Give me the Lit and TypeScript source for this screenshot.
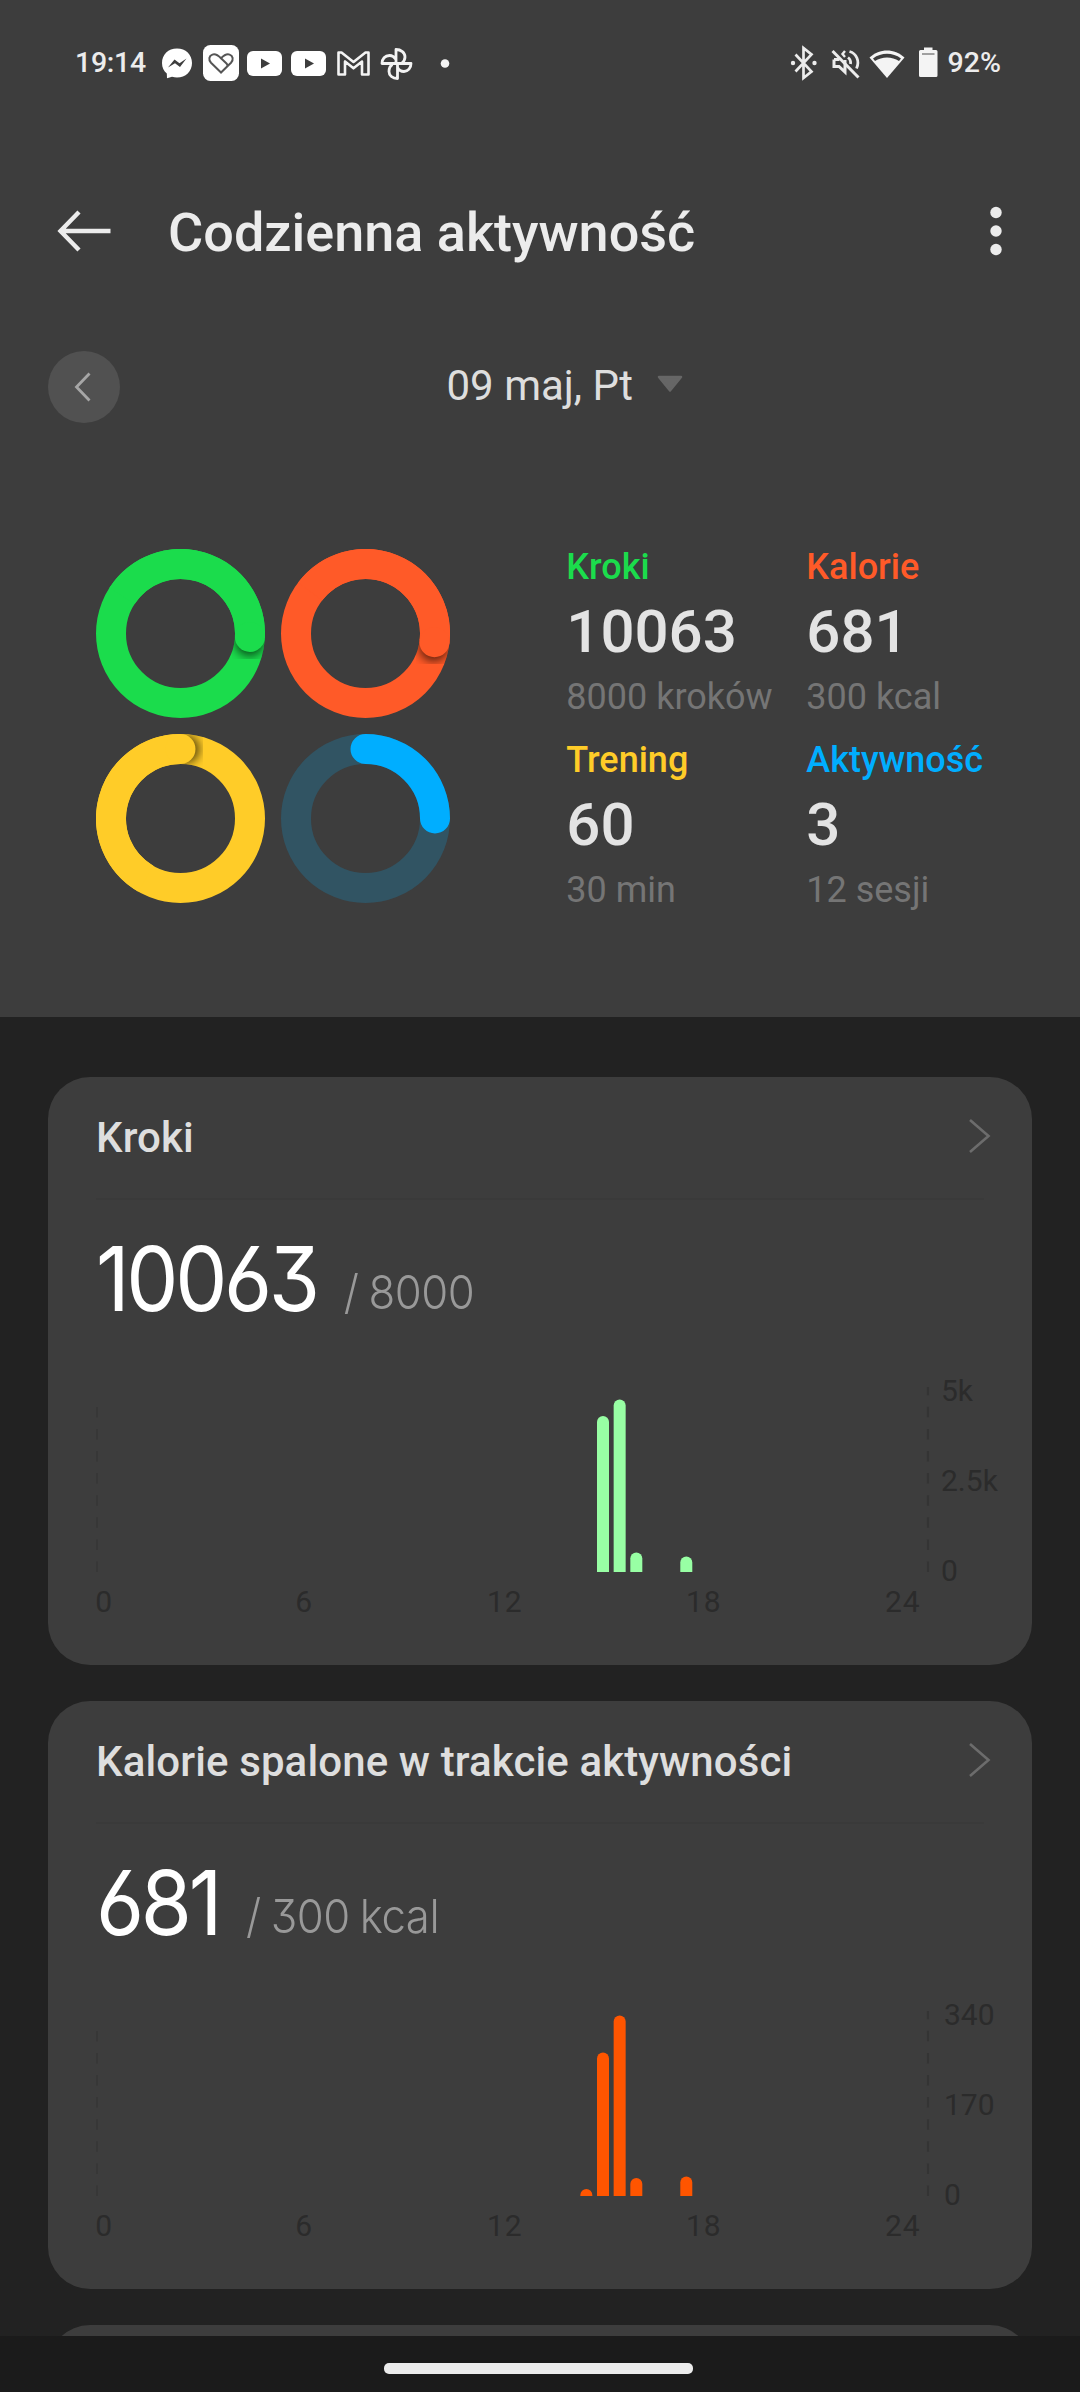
import { LitElement, html, svg, css } from "lit";
import { customElement, property } from "lit/decorators.js";

interface Metric {
  label: string;
  value: string;
  goal: string;
  color: string;
  track: string;
  ratio: number;
}

interface Bar {
  slot: number;
  height: number;
}

const METRICS: Metric[] = [
  { label: "Kroki", value: "10063", goal: "8000 kroków", color: "#1bdc4c", track: "#2b5a38", ratio: 10063 / 8000 },
  { label: "Kalorie", value: "681", goal: "300 kcal", color: "#ff5a28", track: "#6b4238", ratio: 681 / 300 },
  { label: "Trening", value: "60", goal: "30 min", color: "#ffcc28", track: "#6b5f38", ratio: 60 / 30 },
  { label: "Aktywność", value: "3", goal: "12 sesji", color: "#00aeff", track: "#315463", ratio: 3 / 12 },
];

@customElement("progress-ring")
class ProgressRing extends LitElement {
  static styles = css`
    :host { display: block; width: 169px; height: 169px; }
    svg { display: block; }
  `;

  @property() color = "#fff";
  @property() track = "#555";
  @property({ type: Number }) ratio = 0;

  private point(deg: number) {
    const a = (deg * Math.PI) / 180;
    return [84.5 + 69.5 * Math.sin(a), 84.5 - 69.5 * Math.cos(a)];
  }

  private arc(from: number, to: number) {
    const [x1, y1] = this.point(from);
    const [x2, y2] = this.point(to);
    return `M${x1} ${y1}A69.5 69.5 0 ${to - from > 180 ? 1 : 0} 1 ${x2} ${y2}`;
  }

  render() {
    const full = this.ratio >= 1;
    const end = (this.ratio * 360) % 360;
    const [sx, sy] = this.point(end + 4);
    return html`<svg width="169" height="169" viewBox="0 0 169 169" fill="none">
      <defs>
        <mask id="ring"><circle cx="84.5" cy="84.5" r="69.5" stroke="#fff" stroke-width="30" /></mask>
        <filter id="soft" x="-60%" y="-60%" width="220%" height="220%"><feGaussianBlur stdDeviation="5" /></filter>
      </defs>
      <circle cx="84.5" cy="84.5" r="69.5" stroke=${full ? this.color : this.track} stroke-width="30" />
      ${full
        ? svg`<g mask="url(#ring)"><circle cx=${sx} cy=${sy} r="14.5" fill="#000" opacity=".62" filter="url(#soft)" /></g>
            <path d=${this.arc(end - 150, end)} stroke=${this.color} stroke-width="30" />
            <circle cx=${this.point(end)[0]} cy=${this.point(end)[1]} r="15" fill=${this.color} />`
        : svg`<path d=${this.arc(0, end)} stroke=${this.color} stroke-width="30" stroke-linecap="round" />`}
    </svg>`;
  }
}

@customElement("activity-card")
class ActivityCard extends LitElement {
  static styles = css`
    :host {
      display: flex; flex-direction: column; flex: none; box-sizing: border-box;
      height: 588px; border-radius: 42px; background: #3d3d3d; overflow: hidden;
    }
    .head {
      display: flex; align-items: center; justify-content: space-between;
      height: 118px; margin: 0 48px; padding-bottom: 3px; border-bottom: 2px solid #3a3a3a;
    }
    .title { font-size: 42px; line-height: 50px; font-weight: 500; color: #dedede; padding-top: 3px; letter-spacing: .12px; white-space: nowrap; }
    .chevron { display: block; margin-right: -8px; }
    .figures {
      display: flex; align-items: baseline; margin: 24.6px 48px 0; height: 108px;
      font-family: Inter, sans-serif; font-feature-settings: "cv03" 1, "cv09" 1; white-space: nowrap;
      transform: scaleX(.93); transform-origin: left center;
    }
    .value { font-size: 89px; line-height: 108px; font-weight: 400; color: #fff; letter-spacing: -3.6px; }
    .goal {
      font-size: 47px; line-height: 60px; font-weight: 300; color: #999;
      letter-spacing: -.5px; word-spacing: -2px; margin-left: 29px; transform: translateY(-2.5px);
    }
    .chart { display: block; margin-top: 32.4px; }
    .tick { font-family: Roboto, sans-serif; font-size: 30px; fill: #2b2b2b; }
    .hour { letter-spacing: .8px; }
  `;

  @property() heading = "";
  @property() value = "";
  @property() goal = "";
  @property() color = "#fff";
  @property({ type: Number }) tickX = 892;
  @property({ attribute: false }) ticks: string[] = [];
  @property({ attribute: false }) bars: Bar[] = [];

  private bar(b: Bar) {
    const x = 49.2 + b.slot * 16.66;
    const r = 6;
    const top = 207 - b.height;
    return svg`<path fill=${this.color}
      d="M${x} 207V${top + r}A${r} ${r} 0 0 1 ${x + 12} ${top + r}V207Z" />`;
  }

  render() {
    const hours: [string, number][] = [["0", 47.3], ["6", 247.3], ["12", 439], ["18", 638], ["24", 837]];
    return html`
      <div class="head">
        <div class="title">${this.heading}</div>
        <svg class="chevron" width="24" height="36" viewBox="0 0 24 36" fill="none" stroke="#6c6c6c" stroke-width="2.6">
          <path d="M2 2L20.5 18L2 34" />
        </svg>
      </div>
      <div class="figures"><span class="value">${this.value}</span><span class="goal">/ ${this.goal}</span></div>
      <svg class="chart" width="984" height="300" viewBox="0 0 984 300">
        <path d="M49 207V42" stroke="#373737" stroke-width="2" stroke-dasharray="10.5 11.6" />
        <path d="M880 207V22" stroke="#343434" stroke-width="2.2" stroke-dasharray="10.5 11.6" />
        ${this.bars.map((b) => this.bar(b))}
        ${this.ticks.map((t, i) => svg`<text class="tick" x=${this.tickX} y=${36 + i * 90}>${t}</text>`)}
        ${hours.map(([t, x]) => svg`<text class="tick hour" x=${x} y="247">${t}</text>`)}
      </svg>
    `;
  }
}

@customElement("status-bar")
class StatusBar extends LitElement {
  static styles = css`
    :host {
      display: flex; align-items: center; justify-content: space-between; box-sizing: border-box;
      height: 125px; padding: 0 79px 0 75px; color: #ececec; font-size: 28.5px; line-height: 34px;
    }
    .side { display: flex; align-items: center; }
    .clock { width: 82px; font-weight: 500; letter-spacing: -.3px; }
    .battery { font-weight: 500; }
    .system { margin-right: -1.5px; }
    svg { display: block; }
  `;

  render() {
    return html`
      <div class="side">
        <span class="clock">19:14</span>
        <svg width="300" height="40" viewBox="0 0 300 40" fill="#fff">
          <path d="M20 5.5C11.3 5.5 5 11.5 5 20C5 24.400 6.800 28 9.800 30.600L10 35.300L15 33.700C16.600 34.200 18.300 34.500 20 34.500C28.700 34.500 35 28.400 35 20C35 11.500 28.700 5.500 20 5.500Z" />
          <path d="M11 24.500L17.500 16.500L22.500 20.300L29.500 15.500L23 24L18 20.200Z" fill="#3d3d3d" />
          <rect x="46" y="2" width="36" height="36" rx="7.500" />
          <path d="M64 29.500L54 19.800C51.200 16.800 52 12.800 55.400 11.600C58.600 10.500 61.200 12.400 64 15.300C66.800 12.400 69.400 10.500 72.600 11.600C76 12.800 76.800 16.800 74 19.800ZM64 15.300L69.500 20.500C71.200 22.200 70.400 23.600 69 24.800"
            fill="none" stroke="#555" stroke-width="2" />
          <rect x="90" y="8" width="35" height="25" rx="6" />
          <path d="M104 15.500L113 20.500L104 25.500Z" fill="#3d3d3d" />
          <rect x="134" y="8" width="35" height="25" rx="6" />
          <path d="M148 15.500L157 20.500L148 25.500Z" fill="#3d3d3d" />
          <path d="M181.500 31.500V9.500H184.500L196.500 19L208.500 9.500H211.500V31.500H205V18.500L196.500 25.300L188 18.500V31.500Z"
            fill="none" stroke="#f4f4f4" stroke-width="2.600" stroke-linejoin="round" />
          <path d="M239 20.500V6.500C244 6.500 248 9.700 248 14C248 17 246.500 19 244.500 20.500M239 20.500H254C254 25 251 28.500 247 28.500C243.500 28.500 241.500 26.500 240.500 24.500M240.500 20.500V35.500C235.500 35.500 232 32.500 232 28.500C232 25.500 233 23 235.500 21.500M240.500 20.500H225C225 16 228 12.500 232.500 12.500C235.500 12.500 237.500 14.200 239 16.500"
            fill="none" stroke="#f4f4f4" stroke-width="2.800" stroke-linejoin="round" />
          <circle cx="288" cy="20.500" r="4.300" fill="#f4f4f4" />
        </svg>
      </div>
      <div class="side">
        <svg class="system" width="164" height="40" viewBox="0 0 164 40" fill="none" stroke="#ececec" stroke-width="2.700">
          <path d="M10.500 11.500L26.500 28.500L18.500 35V5L26.500 11.500L10.500 28.500" />
          <circle cx="8" cy="20" r="2.200" fill="#ececec" stroke="none" />
          <circle cx="29.500" cy="20" r="2.200" fill="#ececec" stroke="none" />
          <path d="M47.500 8L73.500 34.500" stroke-width="3" />
          <path d="M49 16.500V23.500H54L60 29V17M49 16.500H54.500" stroke-width="3" />
          <path d="M60 8L57.500 11L60 14" stroke-width="2.400" />
          <path d="M63 14.500C65 16 66 18 65.500 21M64.500 8.500C71.500 10.500 75 18 71.500 25.500" stroke-width="2.800" />
          <path d="M102 35L84.500 14.500C94.500 5 109.500 5 119.500 14.500Z" fill="#f4f4f4" stroke="none" />
          <path d="M88 15.500C96.500 9.300 107.500 9.300 116 15.500L114 18C107 13.300 97 13.300 90 18Z" fill="#3d3d3d" stroke="none" />
          <path d="M134 8.500Q134 7 135.500 7H139V4.500H147.500V7H151Q152.500 7 152.500 8.500V32.500Q152.500 34 151 34H135.500Q134 34 134 32.500Z" fill="#f4f4f4" stroke="none" />
          <path d="M137 11H149.500" stroke="#8a8a8a" stroke-width="1.600" />
        </svg>
        <span class="battery">92%</span>
      </div>
    `;
  }
}

@customElement("app-root")
class AppRoot extends LitElement {
  static styles = css`
    :host {
      display: flex; flex-direction: column; width: 1080px; height: 2392px; overflow: hidden;
      background: #222; font-family: Roboto, sans-serif; color: #ececec;
    }
    .screen { flex: 1; min-height: 0; overflow: hidden; display: flex; flex-direction: column; }
    .hero { flex: none; height: 1017px; background: #3d3d3d; }
    .bar { display: flex; align-items: center; height: 212px; padding: 0 76px 0 56px; }
    .bar h1 { flex: 1; margin: 0; padding: 3px 0 0 56px; font-size: 54px; line-height: 64px; font-weight: 500; white-space: nowrap; }
    .dates { display: flex; align-items: center; height: 100px; padding-left: 48px; }
    .prev { width: 72px; height: 72px; border-radius: 50%; background: #515151; display: grid; place-items: center; }
    .date { margin: 0 24px 3px 326.5px; font-size: 42px; line-height: 50px; color: #dedede; white-space: nowrap; }
    .arrow { margin-bottom: 6px; }
    .summary { display: flex; align-items: flex-start; padding: 108.7px 0 0 96px; }
    .rings { display: grid; grid-template-columns: 169px 169px; gap: 16px; margin-top: 3.3px; }
    .stats { display: grid; grid-template-columns: 240px 240px; row-gap: 21px; margin-left: 116.3px; }
    .stat { white-space: nowrap; }
    .label { font-size: 36px; line-height: 42px; font-weight: 500; }
    .value { font-size: 60px; line-height: 70px; font-weight: 500; color: #e3e3e3; margin: 9.8px 0 8.2px; }
    .goal { font-size: 36px; line-height: 42px; color: #757575; }
    .cards { flex: none; display: flex; flex-direction: column; gap: 36px; padding: 60px 48px 0; }
    .next { height: 120px; border-radius: 42px 42px 0 0; background: #3d3d3d; }
    .nav { flex: none; height: 56px; background: #1b1b1b; display: flex; justify-content: center; align-items: center; }
    .handle { width: 309px; height: 10.5px; border-radius: 5px; background: #ececec; margin: 9px 3px 0 0; }
    svg { display: block; }
  `;

  render() {
    return html`
      <div class="screen">
        <header class="hero">
          <status-bar></status-bar>
          <div class="bar">
            <svg width="56" height="44" viewBox="0 0 56 44" fill="none" stroke="#ececec" stroke-width="4.400">
              <path d="M54.500 22H5M23 3L4.500 22L23 41" />
            </svg>
            <h1>Codzienna aktywność</h1>
            <svg width="16" height="50" viewBox="0 0 16 50" fill="#ececec">
              <circle cx="8" cy="6.500" r="5.700" /><circle cx="8" cy="25" r="5.700" /><circle cx="8" cy="43.500" r="5.700" />
            </svg>
          </div>
          <div class="dates">
            <div class="prev">
              <svg width="20" height="32" viewBox="0 0 20 32" fill="none" stroke="#a6a6a6" stroke-width="2.800">
                <path d="M15.500 2.500L2.500 16L15.500 29.500" />
              </svg>
            </div>
            <div class="date">09 maj, Pt</div>
            <svg class="arrow" width="26" height="18" viewBox="0 0 26 18">
              <path d="M2 2H24L13 15.500Z" fill="#666" stroke="#666" stroke-width="2.500" stroke-linejoin="round" />
            </svg>
          </div>
          <section class="summary">
            <div class="rings">
              ${METRICS.map((m) => html`<progress-ring .color=${m.color} .track=${m.track} .ratio=${m.ratio}></progress-ring>`)}
            </div>
            <div class="stats">
              ${METRICS.map((m) => html`<div class="stat">
                <div class="label" style="color:${m.color}">${m.label}</div>
                <div class="value">${m.value}</div>
                <div class="goal">${m.goal}</div>
              </div>`)}
            </div>
          </section>
        </header>
        <main class="cards">
          <activity-card heading="Kroki" value="10063" goal="8000" color="#98ffa4" .tickX=${893}
            .ticks=${["5k", "2.5k", "0"]}
            .bars=${[{ slot: 30, height: 156 }, { slot: 31, height: 172.5 }, { slot: 32, height: 19.5 }, { slot: 35, height: 15.5 }]}></activity-card>
          <activity-card heading="Kalorie spalone w trakcie aktywności" value="681" goal="300 kcal" color="#ff5500" .tickX=${896}
            .ticks=${["340", "170", "0"]}
            .bars=${[{ slot: 29, height: 7 }, { slot: 30, height: 143.5 }, { slot: 31, height: 180.5 }, { slot: 32, height: 18 }, { slot: 35, height: 19.5 }]}></activity-card>
          <div class="next"></div>
        </main>
      </div>
      <footer class="nav"><div class="handle"></div></footer>
    `;
  }
}
